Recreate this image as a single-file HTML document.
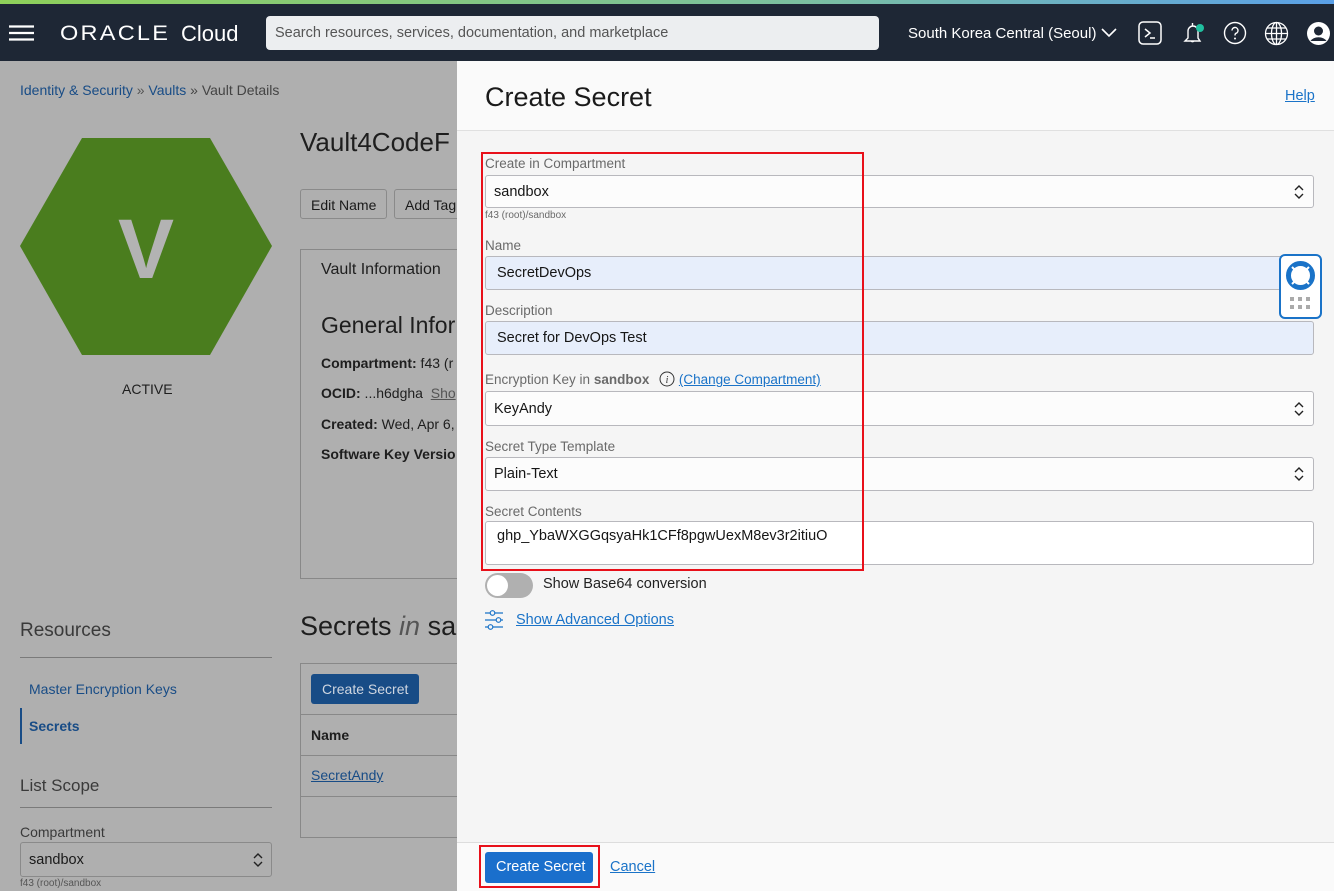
<!DOCTYPE html>
<html><head><meta charset="utf-8"><style>
*{box-sizing:border-box;margin:0;padding:0}
body{width:1334px;height:891px;overflow:hidden;font-family:"Liberation Sans",Arial,sans-serif;position:relative;background:#afafaf;color:#1a1a1a}
.a{position:absolute}
.top{left:0;top:0;width:1334px;height:4px;background:linear-gradient(90deg,#8ed05a,#7cc0a0 60%,#5aa0e8)}
.nav{left:0;top:4px;width:1334px;height:57px;background:#1e2735}
.lnk{color:#184c86}
.dark{color:#1e1e1e}
.panel{left:457px;top:61px;width:877px;height:830px;background:#f5f5f5}
.lbl{position:absolute;left:28px;font-size:13.5px;color:#6a6a6a}
.inp{position:absolute;left:28px;width:829px;border:1px solid #b8b8bd;border-radius:3px;background:#fcfcfc;font-size:14.5px;color:#161616;padding-left:8px;display:flex;align-items:center}
.blue{background:#e7eefb;padding-left:11px}
.chev{position:absolute;right:9px;top:50%;transform:translateY(-50%)}
</style></head><body>
<div class="a top"></div>
<div class="a nav">
 <svg class="a" style="left:9px;top:21px" width="25" height="16"><path d="M0 1.5H25M0 8H25M0 14.5H25" stroke="#fff" stroke-width="2.2"/></svg>
 <div class="a" style="left:60px;top:18px;color:#fff;font-size:21px;letter-spacing:2px;transform:scaleX(1.12);transform-origin:left">ORACLE</div>
 <div class="a" style="left:181px;top:17px;color:#fff;font-size:22px">Cloud</div>
 <div class="a" style="left:266px;top:12px;width:613px;height:34px;background:#eceef0;border-radius:4px;color:#555;font-size:14.5px;padding:9px 0 0 9px">Search resources, services, documentation, and marketplace</div>
 <div class="a" style="left:908px;top:21px;color:#fff;font-size:15px">South Korea Central (Seoul)</div>
 <svg class="a" style="left:1101px;top:24px" width="16" height="10"><path d="M1 1l7 7 7-7" stroke="#fff" fill="none" stroke-width="1.6"/></svg>
 <svg class="a" style="left:1138px;top:17px" width="26" height="26"><rect x="1" y="1" width="22" height="22" rx="4" stroke="#fff" fill="none" stroke-width="1.5"/><path d="M7 8l5 4-5 4M12 17h5" stroke="#fff" fill="none" stroke-width="1.5"/></svg>
 <svg class="a" style="left:1181px;top:16px" width="26" height="28"><path d="M4 21h15l-2-3v-7a5 5 0 0 0-10 0v7zM10 21a2 2 0 0 0 3 0M11.5 3v3" stroke="#fff" fill="none" stroke-width="1.4"/><circle cx="19" cy="8" r="4" fill="#20c0a0"/></svg>
 <svg class="a" style="left:1223px;top:17px" width="24" height="24"><circle cx="12" cy="12" r="10.5" stroke="#fff" fill="none" stroke-width="1.4"/><path d="M9 9.5a3 3 0 1 1 4 2.8c-1 .5-1 1-1 2.2" stroke="#fff" fill="none" stroke-width="1.4"/><circle cx="12" cy="17.5" r="1" fill="#fff"/></svg>
 <svg class="a" style="left:1264px;top:17px" width="25" height="25"><g stroke="#fff" fill="none" stroke-width="1.3"><circle cx="12.5" cy="12.5" r="11"/><ellipse cx="12.5" cy="12.5" rx="5" ry="11"/><path d="M1.5 12.5h22M3 7h19M3 18h19M12.5 1.5v22"/></g></svg>
 <svg class="a" style="left:1306px;top:17px" width="25" height="25"><circle cx="12.5" cy="12.5" r="11.5" fill="#fff"/><circle cx="12.5" cy="10" r="4.5" fill="#1e2735"/><path d="M4.5 20a9 7 0 0 1 16 0" fill="#1e2735"/></svg>
</div>

<div class="a" style="left:20px;top:82px;font-size:14px"><span class="lnk">Identity &amp; Security</span> <span style="color:#555">»</span> <span class="lnk">Vaults</span> <span style="color:#444">» Vault Details</span></div>
<svg class="a" style="left:20px;top:138px" width="253" height="218"><polygon points="62,0 190,0 252,108 190,217 62,217 0,108" fill="#4a7d1e"/><text x="126" y="140" text-anchor="middle" font-family="Liberation Sans" font-weight="bold" font-size="84" fill="#b3b3b3">V</text></svg>
<div class="a dark" style="left:122px;top:381px;font-size:14px">ACTIVE</div>
<div class="a dark" style="left:300px;top:127px;font-size:26px">Vault4CodeF</div>
<div class="a" style="left:300px;top:189px;width:87px;height:30px;border:1px solid #8a8a8a;border-radius:3px;font-size:14px;padding:7px 0 0 10px" >Edit Name</div>
<div class="a" style="left:394px;top:189px;width:70px;height:30px;border:1px solid #8a8a8a;border-radius:3px;font-size:14px;padding:7px 0 0 10px">Add Tag</div>
<div class="a" style="left:300px;top:249px;width:160px;height:330px;border:1px solid #888"></div>
<div class="a dark" style="left:321px;top:261px;font-size:16px">Vault Information</div>
<div class="a dark" style="left:321px;top:312px;font-size:23px">General Infor</div>
<div class="a dark" style="left:321px;top:355px;font-size:14px"><b>Compartment:</b> f43 (r</div>
<div class="a dark" style="left:321px;top:385px;font-size:14px"><b>OCID:</b> ...h6dgha &nbsp;<u style="color:#555">Sho</u></div>
<div class="a dark" style="left:321px;top:416px;font-size:14px"><b>Created:</b> Wed, Apr 6,</div>
<div class="a dark" style="left:321px;top:446px;font-size:14px"><b>Software Key Versio</b></div>
<div class="a" style="left:20px;top:620px;font-size:19px;color:#3a3a3a">Resources</div>
<div class="a" style="left:20px;top:657px;width:252px;height:1px;background:#7a7a7a"></div>
<div class="a lnk" style="left:29px;top:681px;font-size:14px">Master Encryption Keys</div>
<div class="a" style="left:20px;top:708px;width:2px;height:36px;background:#184c86"></div>
<div class="a lnk" style="left:29px;top:718px;font-size:14px;font-weight:bold">Secrets</div>
<div class="a" style="left:20px;top:776px;font-size:17px;color:#3a3a3a">List Scope</div>
<div class="a" style="left:20px;top:807px;width:252px;height:1px;background:#7a7a7a"></div>
<div class="a" style="left:20px;top:824px;font-size:14px;color:#3a3a3a">Compartment</div>
<div class="a" style="left:20px;top:842px;width:252px;height:35px;border:1px solid #8a8a8a;border-radius:3px;font-size:14.5px;padding:9px 0 0 8px">sandbox<svg class="a" style="right:8px;top:9px" width="10" height="16"><path d="M1 6l4-4 4 4M1 10l4 4 4-4" stroke="#222" fill="none" stroke-width="1.4"/></svg></div>
<div class="a" style="left:20px;top:878px;font-size:10px;color:#555">f43 (root)/sandbox</div>
<div class="a dark" style="left:300px;top:611px;font-size:27px">Secrets <i style="color:#555">in</i> sa</div>
<div class="a" style="left:300px;top:663px;width:160px;height:175px;border:1px solid #888"></div>
<div class="a" style="left:311px;top:674px;width:108px;height:30px;background:#184c86;border-radius:3px;color:#cfd6e0;font-size:14px;padding:7px 0 0 11px">Create Secret</div>
<div class="a" style="left:300px;top:714px;width:160px;height:1px;background:#888"></div>
<div class="a dark" style="left:311px;top:727px;font-size:14px;font-weight:bold">Name</div>
<div class="a" style="left:300px;top:755px;width:160px;height:1px;background:#888"></div>
<div class="a lnk" style="left:311px;top:767px;font-size:14px;text-decoration:underline">SecretAndy</div>
<div class="a" style="left:300px;top:796px;width:160px;height:1px;background:#888"></div>

<div class="a panel">
 <div class="a" style="left:0;top:0;width:877px;height:70px;background:#fafafa;border-bottom:1px solid #e0e0e0"></div>
 <div class="a" style="left:28px;top:21px;font-size:27px;color:#1a1a1a">Create Secret</div>
 <div class="a" style="left:828px;top:27px;font-size:14.5px;color:#1a73c8;text-decoration:underline">Help</div>
 <div class="lbl" style="top:95px">Create in Compartment</div>
 <div class="inp" style="top:114px;height:33px">sandbox<svg class="chev" width="10" height="16"><path d="M1 6l4-4 4 4M1 10l4 4 4-4" stroke="#222" fill="none" stroke-width="1.4"/></svg></div>
 <div class="lbl" style="top:149px;font-size:10px">f43 (root)/sandbox</div>
 <div class="lbl" style="top:177px">Name</div>
 <div class="inp blue" style="top:195px;height:34px">SecretDevOps</div>
 <div class="lbl" style="top:242px">Description</div>
 <div class="inp blue" style="top:260px;height:34px">Secret for DevOps Test</div>
 <div class="lbl" style="top:310px">Encryption Key in <b>sandbox</b> <svg width="16" height="16" style="vertical-align:-3px;margin-left:6px"><circle cx="8" cy="8" r="7" stroke="#333" fill="none"/><text x="8" y="12" font-size="10" font-style="italic" text-anchor="middle" fill="#333" font-family="Liberation Serif">i</text></svg> <span style="color:#1a73c8;text-decoration:underline">(Change Compartment)</span></div>
 <div class="inp" style="top:330px;height:35px">KeyAndy<svg class="chev" width="10" height="16"><path d="M1 6l4-4 4 4M1 10l4 4 4-4" stroke="#222" fill="none" stroke-width="1.4"/></svg></div>
 <div class="lbl" style="top:378px">Secret Type Template</div>
 <div class="inp" style="top:396px;height:34px">Plain-Text<svg class="chev" width="10" height="16"><path d="M1 6l4-4 4 4M1 10l4 4 4-4" stroke="#222" fill="none" stroke-width="1.4"/></svg></div>
 <div class="lbl" style="top:443px">Secret Contents</div>
 <div class="inp" style="top:460px;height:44px;align-items:flex-start;padding:6px 0 0 11px;background:#fff">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</div>
 <div class="a" style="left:28px;top:512px;width:48px;height:25px;border-radius:13px;background:#b0b0b0"></div>
 <div class="a" style="left:30px;top:514px;width:21px;height:21px;border-radius:50%;background:#fff"></div>
 <div class="a" style="left:86px;top:515px;font-size:14.5px;color:#222">Show Base64 conversion</div>
 <svg class="a" style="left:28px;top:549px" width="20" height="20"><g stroke="#1a73c8" fill="none" stroke-width="1.2"><path d="M0 3h5M10 3h8M0 10h11M16 10h2M0 17h3M8 17h10"/><circle cx="7.5" cy="3" r="2.3"/><circle cx="13.5" cy="10" r="2.3"/><circle cx="5.5" cy="17" r="2.3"/></g></svg>
 <div class="a" style="left:59px;top:551px;font-size:14.5px;color:#1a73c8;text-decoration:underline">Show Advanced Options</div>
 <div class="a" style="left:24px;top:91px;width:383px;height:419px;border:2px solid #e8101a"></div>
 <div class="a" style="left:0;top:781px;width:877px;height:49px;background:#fafafa;border-top:1px solid #ddd"></div>
 <div class="a" style="left:22px;top:784px;width:121px;height:43px;border:2px solid #e8101a"></div>
 <div class="a" style="left:28px;top:791px;width:108px;height:31px;background:#1a6fcc;border-radius:3px;color:#fff;font-size:14.5px;padding:7px 0 0 11px">Create Secret</div>
 <div class="a" style="left:153px;top:798px;font-size:14.5px;color:#1a73c8;text-decoration:underline">Cancel</div>
</div>
<div class="a" style="left:1279px;top:254px;width:43px;height:65px;background:#fff;border:2px solid #1a73c8;border-radius:6px"></div>
<svg class="a" style="left:1285px;top:260px" width="31" height="31"><circle cx="15.5" cy="15.5" r="12" stroke="#1a73c8" stroke-width="5" fill="none"/><g stroke="#fff" stroke-width="2"><path d="M7 7l4 4M24 7l-4 4M7 24l4-4M24 24l-4-4"/></g></svg>
<svg class="a" style="left:1290px;top:297px" width="22" height="14"><g fill="#aaa"><rect x="0" y="0" width="4" height="4"/><rect x="8" y="0" width="4" height="4"/><rect x="16" y="0" width="4" height="4"/><rect x="0" y="8" width="4" height="4"/><rect x="8" y="8" width="4" height="4"/><rect x="16" y="8" width="4" height="4"/></g></svg>
</body></html>
